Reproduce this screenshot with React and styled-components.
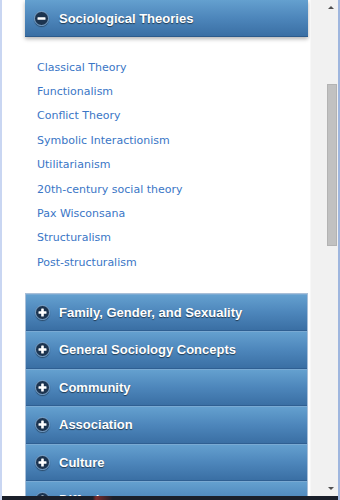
import React from 'react';
import styled, { createGlobalStyle } from 'styled-components';

const theories = [
  'Classical Theory',
  'Functionalism',
  'Conflict Theory',
  'Symbolic Interactionism',
  'Utilitarianism',
  '20th-century social theory',
  'Pax Wisconsana',
  'Structuralism',
  'Post-structuralism',
];

const sections = [
  'Family, Gender, and Sexuality',
  'General Sociology Concepts',
  'Community',
  'Association',
  'Culture',
  'Diffusion',
];

const ToggleIcon = ({ open }) => (
  <IconWrap>
    <svg width="15" height="15" viewBox="0 0 15 15">
      <circle cx="7.5" cy="7.5" r="7" fill="#1c3450" stroke="#8fb3d6" strokeWidth="0.8" />
      <rect x="3.5" y="6.2" width="8" height="2.6" rx="0.6" fill="#fff" />
      {!open && <rect x="6.2" y="3.5" width="2.6" height="8" rx="0.6" fill="#fff" />}
    </svg>
  </IconWrap>
);

function App() {
  return (
    <>
      <GlobalStyle />
      <Frame>
        <Viewport>
          <Content>
            <OpenHeader>
              <ToggleIcon open />
              <HeaderTitle>Sociological Theories</HeaderTitle>
            </OpenHeader>
            <TheoryList>
              {theories.map((t) => (
                <li key={t}>
                  <TheoryLink href="#">{t}</TheoryLink>
                </li>
              ))}
            </TheoryList>
            <Sections>
              {sections.map((s) => (
                <SectionHeader key={s}>
                  <ToggleIcon />
                  <HeaderTitle>{s}</HeaderTitle>
                </SectionHeader>
              ))}
            </Sections>
          </Content>
          <Scrollbar>
            <Arrow />
            <Track>
              <Thumb />
            </Track>
            <Arrow down />
          </Scrollbar>
        </Viewport>
        <Taskbar />
      </Frame>
    </>
  );
}

export default App;

const GlobalStyle = createGlobalStyle`
  html, body {
    margin: 0;
    padding: 0;
    background: #fff;
    overflow: hidden;
  }
`;

const Frame = styled.div`
  width: 340px;
  height: 500px;
  display: flex;
  flex-direction: column;
  box-sizing: border-box;
  border-left: 2px solid #c9d6f2;
  border-right: 2px solid #9fb6de;
  background: #fff;
`;

const Viewport = styled.div`
  flex: 1;
  display: flex;
  min-height: 0;
`;

const Content = styled.div`
  flex: 1;
  padding: 0 2px 0 23px;
  overflow: hidden;
`;

const headerBase = `
  display: flex;
  align-items: center;
  gap: 9px;
  padding-left: 10px;
  box-sizing: border-box;
  background: linear-gradient(to bottom, #64a0cf 0%, #4d86bb 50%, #3a6fa4 100%);
  color: #fff;
`;

const OpenHeader = styled.div`
  ${headerBase}
  height: 37px;
  padding-left: 9px;
  gap: 10px;
  border-bottom: 1px solid #2c5b8c;
  box-shadow: 0 2px 4px rgba(0, 0, 0, 0.3);
`;

const IconWrap = styled.span`
  display: flex;
  width: 15px;
  height: 15px;
  border-radius: 50%;
  box-shadow: 0 1px 1px rgba(0, 0, 0, 0.4);
`;

const HeaderTitle = styled.span`
  font-family: 'Liberation Sans', Arial, sans-serif;
  font-weight: bold;
  font-size: 13px;
  text-shadow: 0 1px 1px rgba(0, 0, 0, 0.55);
  white-space: nowrap;
`;

const TheoryList = styled.ul`
  list-style: none;
  margin: 0;
  padding: 18px 0 18px 12px;

  li {
    height: 24.4px;
    display: flex;
    align-items: center;
  }
`;

const TheoryLink = styled.a`
  font-family: 'DejaVu Sans', Verdana, sans-serif;
  font-size: 11px;
  color: #3a76c6;
  text-decoration: none;
`;

const Sections = styled.div`
  display: flex;
  flex-direction: column;
  border: 1px solid #a9bfd8;
  border-bottom: none;
`;

const SectionHeader = styled.div`
  ${headerBase}
  height: 37.5px;
  padding-left: 9px;
  border-top: 1px solid #7aaad3;
  border-bottom: 1px solid #2f5f92;
`;

const Scrollbar = styled.div`
  width: 27px;
  display: flex;
  flex-direction: column;
  background: #f1f1f1;
  border-left: 1px solid #f7f7f7;
`;

const Arrow = styled.div`
  height: 14px;
  position: relative;

  &::after {
    content: '';
    position: absolute;
    right: 4px;
    top: ${(p) => (p.down ? '5px' : '6px')};
    border-left: 3px solid transparent;
    border-right: 3px solid transparent;
    ${(p) => (p.down ? 'border-top: 3px solid #505050;' : 'border-bottom: 3px solid #505050;')}
  }
`;

const Track = styled.div`
  flex: 1;
  display: flex;
  justify-content: flex-end;
  padding-top: 70px;
`;

const Thumb = styled.div`
  width: 10px;
  height: 162px;
  margin-right: 1px;
  background: #c1c1c1;
  border: 1px solid #b3b3b3;
  box-sizing: border-box;
`;

const Taskbar = styled.div`
  height: 4px;
  background: linear-gradient(to right, #1a1f2a 0%, #1a1f2a 27%, #7a2a2a 28%, #1a1f2a 33%, #1a1f2a 100%);
`;
